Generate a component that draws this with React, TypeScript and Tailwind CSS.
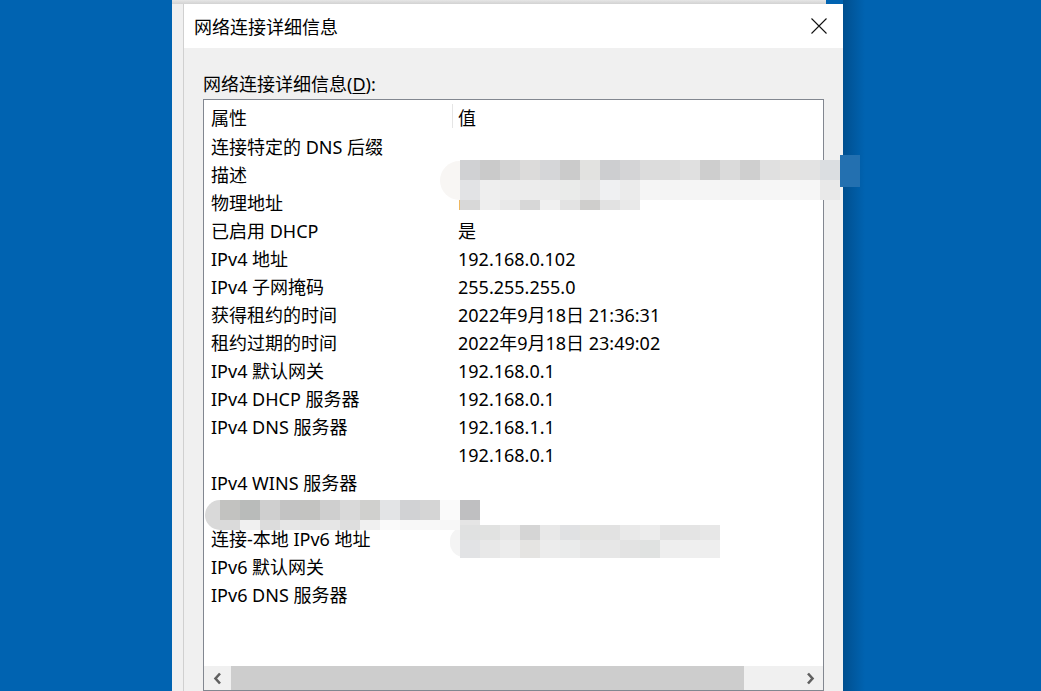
import React from "react"

const rows: [string, string][] = [
  ["连接特定的 DNS 后缀", ""],
  ["描述", ""],
  ["物理地址", "D"],
  ["已启用 DHCP", "是"],
  ["IPv4 地址", "192.168.0.102"],
  ["IPv4 子网掩码", "255.255.255.0"],
  ["获得租约的时间", "2022年9月18日 21:36:31"],
  ["租约过期的时间", "2022年9月18日 23:49:02"],
  ["IPv4 默认网关", "192.168.0.1"],
  ["IPv4 DHCP 服务器", "192.168.0.1"],
  ["IPv4 DNS 服务器", "192.168.1.1"],
  ["", "192.168.0.1"],
  ["IPv4 WINS 服务器", ""],
  ["", ""],
  ["连接-本地 IPv6 地址", ""],
  ["IPv6 默认网关", ""],
  ["IPv6 DNS 服务器", ""],
]

// pixelated blur patches covering private values
const blobs: { x: number; y: number; h: number; colors: string[] }[] = [
  {
    x: 460,
    y: 160,
    h: 20,
    colors: ["#d0d1d3", "#cacaca", "#d3d3d3", "#dcdbda", "#d5d6d8", "#cbcbcb", "#e2e2e0", "#cdced0", "#d4d4d6", "#dcdcdc", "#dcdcdc", "#e0e0e0", "#cecece", "#dadada", "#cfcfcf", "#e0e0e0", "#e4e3e1", "#e3e3e3", "#dbdee1", "#ececec"],
  },
  {
    x: 460,
    y: 180,
    h: 20,
    colors: ["#e2e3e5", "#eeeeee", "#ededed", "#ececec", "#ebebeb", "#eaebea", "#e6e6e6", "#eff0f2", "#ebebeb", "#f5f5f5", "#f4f4f4", "#f5f5f5", "#f5f5f5", "#f4f4f4", "#f5f5f5", "#f6f6f6", "#f7f7f7", "#f6f6f6", "#e9e9e9"],
  },
  {
    x: 460,
    y: 200,
    h: 10,
    colors: ["#d8d8d8", "#eeeeee", "#e9e9e9", "#d7d7d7", "#f0f0f0", "#e3e3e3", "#cfcecc", "#e2e2e2", "#e9e9e9"],
  },
  {
    x: 220,
    y: 500,
    h: 20,
    colors: ["#c2c2c0", "#b9bbba", "#cfcfcf", "#c3c3c3", "#c3c3c1", "#cfcfcf", "#d9d9d9", "#d0d0ce", "#e3e4e6", "#d1d2d4", "#d5d5d5", "#fafafa", "#bfbfc1"],
  },
  {
    x: 220,
    y: 520,
    h: 10,
    colors: ["#dadada", "#f0f0f0", "#dcdcdc", "#e6e6e6", "#e4e4e4", "#e6e6e6", "#dedede", "#f0f0f0", "#fafafa", "#f8f8f8", "#f8f8f8", "#f7f7f7", "#e5e5e5"],
  },
  {
    x: 460,
    y: 525,
    h: 15,
    colors: ["#e0e1e1", "#e1e2e1", "#e7e7e7", "#d5d5d5", "#e8e8e8", "#e0e1e3", "#e3e3e1", "#e2e2e2", "#e9e9e9", "#ececec", "#e3e3e3", "#e4e4e4", "#e7e7e7"],
  },
  {
    x: 460,
    y: 540,
    h: 18,
    colors: ["#e2e3e5", "#e8e8e8", "#ececec", "#e5e4e2", "#ececec", "#eaebeb", "#e6e6e6", "#e7e7e7", "#e3e3e3", "#e0e2e1", "#eeeeee", "#efefef", "#eeeeee"],
  },
]

function Chevron({ dir }: { dir: "left" | "right" }) {
  return (
    <svg width="9" height="13" viewBox="0 0 9 13">
      <path
        d={dir === "left" ? "M7 1.5 L2.5 6.5 L7 11.5" : "M2 1.5 L6.5 6.5 L2 11.5"}
        fill="none"
        stroke="#606060"
        strokeWidth="2.6"
      />
    </svg>
  )
}

export default function App() {
  return (
    <div
      className="relative flex h-[691px] w-[1041px] overflow-hidden bg-[#0063b1] text-[18px] text-black"
      style={{ fontFamily: '"Noto Sans", "Noto Sans CJK SC", sans-serif' }}
    >
      <div className="w-[172px] shrink-0" />
      <div className="flex w-[671px] shrink-0 flex-col">
        <div className="h-[6px] w-[654px] bg-gradient-to-b from-[#e6e6e6] to-[#d2d2d2]" />
        <div className="flex flex-1">
          <div className="w-[11px] bg-[#f0f0f0]" />
          <div className="flex w-[660px] flex-col border-l border-[#d0d0d0]">
            <div className="flex h-[44px] items-center justify-between bg-white pl-[10px] pr-[16px]">
              <span className="pt-[2px] leading-[24px]">网络连接详细信息</span>
              <svg width="16" height="16" viewBox="0 0 16 16">
                <path d="M0.5 0.5 L15.5 15.5 M15.5 0.5 L0.5 15.5" stroke="#111" strokeWidth="1.1" />
              </svg>
            </div>
            <div className="flex flex-1 flex-col bg-[#f0f0f0] px-[19px] pt-[22px]">
              <div className="mb-[3px] pt-[2px] leading-[24px]">
                网络连接详细信息(<span className="underline underline-offset-2">D</span>):
              </div>
              <div className="flex h-[592px] flex-col border border-[#828790] bg-white">
                <div className="flex flex-1 flex-col pt-px">
                  <div className="flex h-[30px] items-center">
                    <div className="w-[248px] pl-[7px] pt-[4px] leading-[24px]">属性</div>
                    <div className="h-[24px] w-px bg-[#e5e5e5]" />
                    <div className="pl-[5px] pt-[4px] leading-[24px]">值</div>
                  </div>
                  {rows.map(([k, v], i) => (
                    <div key={i} className="flex h-[28px] items-center whitespace-nowrap">
                      <div className="w-[254px] pl-[7px] pt-[4px] leading-[24px]">{k}</div>
                      <div className="pt-[4px] leading-[24px]">{v}</div>
                    </div>
                  ))}
                </div>
                <div className="flex h-[24px] shrink-0 bg-[#f0f0f0]">
                  <div className="flex w-[27px] items-center justify-center">
                    <Chevron dir="left" />
                  </div>
                  <div className="w-[513px] bg-[#cdcdcd]" />
                  <div className="flex-1" />
                  <div className="flex w-[25px] items-center justify-center">
                    <Chevron dir="right" />
                  </div>
                </div>
              </div>
            </div>
          </div>
        </div>
      </div>
      <div className="w-[22px] shrink-0 bg-gradient-to-r from-[#004f8f] to-[#0063b1]" />

      {/* blurred overlays */}
      <div className="absolute left-[440px] top-[161px] h-[39px] w-[24px] rounded-l-full bg-[#f8f6f4]" />
      <div className="absolute left-[205px] top-[500px] h-[30px] w-[20px] rounded-l-full bg-[#d9d9d9]" />
      <div className="absolute left-[450px] top-[527px] h-[30px] w-[14px] rounded-l-full bg-[#f4f4f4]" />
      {blobs.map((b, i) => (
        <div
          key={i}
          className="absolute flex"
          style={{ left: b.x, top: b.y, height: b.h }}
        >
          {b.colors.map((c, j) => (
            <div key={j} className="h-full w-[20px]" style={{ background: c }} />
          ))}
        </div>
      ))}
      <div className="absolute left-[840px] top-[155px] h-[32px] w-[20px] bg-[#2370b0]" />
    </div>
  )
}
